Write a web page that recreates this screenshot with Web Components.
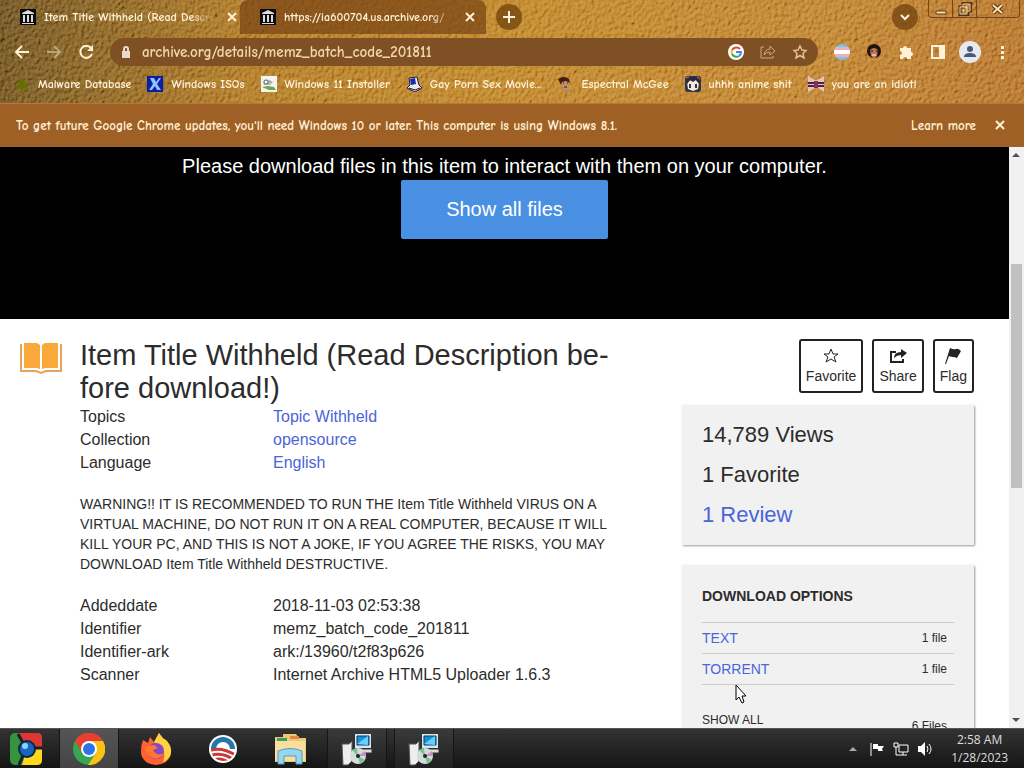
<!DOCTYPE html>
<html lang="en">
<head>
<meta charset="utf-8">
<meta name="viewport" content="width=device-width, initial-scale=1">
<title>Item details</title>
<style>
  html, body { height: 100%; margin: 0; }
  body {
    display: flex;
    flex-direction: column;
    overflow: hidden;
    font-family: "Liberation Sans", Arial, sans-serif;
    color: #2c2c2c;
    background: #fff;
  }
  browser-frame, task-bar { flex: none; }
  page-view { flex: 1; min-height: 0; }
</style>
</head>
<body>
<browser-frame>
  <browser-tab slot="tabs">Item Title Withheld (Read Descri</browser-tab>
  <browser-tab slot="tabs" inactive>https://ia600704.us.archive.org/</browser-tab>
  <book-mark slot="bookmarks" icon="malware">Malware Database</book-mark>
  <book-mark slot="bookmarks" icon="isos">Windows ISOs</book-mark>
  <book-mark slot="bookmarks" icon="installer">Windows 11 Installer</book-mark>
  <book-mark slot="bookmarks" icon="pc">Gay Porn Sex Movie...</book-mark>
  <book-mark slot="bookmarks" icon="face">Espectral McGee</book-mark>
  <book-mark slot="bookmarks" icon="anime">uhhh anime shit</book-mark>
  <book-mark slot="bookmarks" icon="flag">you are an idiot!</book-mark>
</browser-frame>
<page-view>
  <item-theatre></item-theatre>
  <item-details></item-details>
</page-view>
<task-bar></task-bar>

<script>
const define = (name, html, setup) => {
  const template = document.createElement("template");
  template.innerHTML = html;

  customElements.define(name, class extends HTMLElement {
    constructor() {
      super();
      const shadow = this.attachShadow({ mode: "open" });
      shadow.appendChild(template.content.cloneNode(true));
      if (setup) setup(this, shadow);
    }
  });
};

const bookmarkIcons = {
  malware: `<path d="M8 1l3 5 4 8-5-2-2 3-2-3-5 2 4-8z" fill="#667000"/>`,
  isos: `<path fill="#0820a8" d="M0 0h16v16H0z"/><path d="M3 2h4l2 4 3-4h2l-4 6 4 6h-4l-2-4-3 4H2l4-6z" fill="#8fc4ff"/>`,
  installer: `<path fill="#f4f4ec" d="M0 0h16v16H0z"/><path d="M2 6q4-5 10 0l-3 3H3z" fill="#a8b8ae"/><path d="M1 11l6-1 6 1 2 3H8z" fill="#73a34c"/><circle cx="5" cy="6" r="2" fill="#fff" stroke="#567"/>`,
  pc: `<path d="M3 2l8-1 2 8 3 3-7 4-8-4 3-3z" fill="#ece8e8" stroke="#1b1740"/><path d="M4 3l5-1 1 6-5 1z" fill="#172ca8"/><path d="M3 12l6 2 5-2" fill="none" stroke="#1b1740"/>`,
  face: `<path d="M4 5q5-3 8 1l-1 7-3 2-3-4z" fill="#c68d63"/><path d="M1 3q6-4 11 0l1 4-4-2-4 1-1 3z" fill="#471b13"/><path d="M6 7h1m3 0h1M7 11h3" stroke="#3c2018"/><path d="M6 14h7l1 2H6z" fill="#a88c60"/>`,
  anime: `<rect width="16" height="16" rx="3" fill="#343449"/><path d="M2 6l4-2h5l3 3-1 6-5 2-5-2z" fill="#f7e7df"/><path d="M2 8l3-4 3 2 3-2 3 4V2L8 0 2 2z" fill="#282840"/><path d="M4 8h2v4H4zm6 0h2v4h-2z" fill="#30384e"/><path d="M1 2l3-1M12 1l3 2" stroke="#d76878"/>`,
  flag: `<path d="M0 0l7 4h2l7-4v16l-6-4H7l-7 4z" fill="#e9c0bb"/><path d="M0 7h16M0 10h16" stroke="#4b2146" stroke-width="2"/><path d="M6 5h4v7H6z" fill="#813452"/>`
};

define("book-mark", `
  <style>
    :host { display: block; flex: none; }
    a { display: flex; align-items: center; gap: 8px; color: #fff1d5; text-decoration: none; white-space: nowrap; font-size: 12px; line-height: 16px; }
    svg { width: 16px; height: 16px; flex: none; }
  </style>
  <a href="#"><svg viewBox="0 0 16 16" aria-hidden="true"></svg><span><slot></slot></span></a>
`, (host, shadow) => {
  shadow.querySelector("svg").innerHTML = bookmarkIcons[host.getAttribute("icon")] || "";
});

define("browser-tab", `
  <style>
    :host { display: flex; align-items: center; gap: 8px; box-sizing: border-box; width: 240px; height: 34px; padding: 0 0 0 20px; border-radius: 8px 8px 0 0; font-size: 12px; }
    :host([inactive]) { width: 246px; padding-right: 8px; background: #784415b8; }
    span { flex: 1; overflow: hidden; white-space: nowrap; -webkit-mask-image: linear-gradient(90deg, #000 85%, transparent); }
    svg { width: 16px; height: 16px; flex: none; }
    button { width: 16px; height: 16px; padding: 0; border: 0; background: none; color: inherit; }
  </style>
  <svg viewBox="0 0 16 16" aria-hidden="true"><path d="M0 0h16v16H0z" fill="#0d0b09"/><path d="M8 1l6 3v1H2V4zM3 6h2v7H3zm4 0h2v7H7zm4 0h2v7h-2zM2 14h12v1H2z" fill="#ddd"/></svg>
  <span><slot></slot></span>
  <button aria-label="Close tab"><svg viewBox="0 0 16 16"><path d="M4 4l8 8m0-8l-8 8" stroke="currentColor" stroke-width="2"/></svg></button>
`);

define("browser-frame", `
  <style>
    :host { display: block; position: relative; z-index: 1; color: #fff1d5; font-family: "Comic Sans MS", "Comic Neue", "Open Sans", sans-serif; font-weight: 700; }
    .skin { position: relative; isolation: isolate; overflow: hidden; background: linear-gradient(100deg, #65481b 0, #80581d 10%, #aa701f 25%, #b97c22 50%, #b97928 80%, #b06a24); }
    .leather { position: absolute; inset: 0; width: 100%; height: 100%; z-index: -1; mix-blend-mode: soft-light; opacity: .8; }
    button { padding: 0; border: 0; color: inherit; background: none; display: grid; place-items: center; }
    svg { display: block; }
    .tabs { display: flex; align-items: center; height: 34px; }
    .new, .search { width: 26px; height: 26px; border-radius: 50%; background: #71420fc0; }
    .new { margin-left: 10px; }
    .search { margin-left: auto; margin-right: 10px; }
    .window { display: flex; align-self: flex-start; height: 17px; margin-right: 4px; border: 1px solid #714718; border-top: 0; border-radius: 0 0 4px 4px; }
    .window button { width: 24px; border-right: 1px solid #714718; }
    .window button:last-child { width: 42px; border: 0; }
    .toolbar { display: flex; align-items: center; height: 36px; padding: 0 14px; gap: 16px; }
    .toolbar > button { width: 16px; height: 16px; flex: none; }
    .toolbar > .avatar { width: 22px; height: 22px; margin: 0 -3px; border-radius: 50%; background: #e6e9f0; }
    .address { flex: 1; display: flex; align-items: center; height: 28px; min-width: 0; padding: 0 10px; gap: 10px; border-radius: 14px; background: #7e5023; }
    .address input { flex: 1; min-width: 0; padding: 0; border: 0; outline: 0; background: none; color: #f1d5ac; font: inherit; font-size: 15px; }
    .address .actions { display: flex; gap: 16px; }
    .marks { display: flex; align-items: center; box-sizing: border-box; height: 33px; padding: 0 14px 5px; gap: 16px; overflow: hidden; }
    .info { display: flex; align-items: center; box-sizing: border-box; height: 44px; padding: 0 16px; border-top: 1px solid #b77837; border-bottom: 1px solid #96663a; background: #9f6026; font-size: 13px; }
    .info a { margin-left: auto; margin-right: 16px; color: inherit; text-decoration: none; }
  </style>
  <div class="skin">
    <svg class="leather" aria-hidden="true">
      <filter id="grain" x="0" y="0" width="100%" height="100%">
        <feTurbulence type="fractalNoise" baseFrequency=".3 .25" numOctaves="3" seed="8" result="noise"/>
        <feDiffuseLighting in="noise" surfaceScale="2" diffuseConstant=".8" lighting-color="#fff"><feDistantLight azimuth="225" elevation="40"/></feDiffuseLighting>
      </filter>
      <rect width="100%" height="100%" filter="url(#grain)"/>
    </svg>
    <div class="tabs">
      <slot name="tabs"></slot>
      <button class="new" aria-label="New tab"><svg width="14" height="14"><path d="M7 1v12M1 7h12" stroke="currentColor" stroke-width="2"/></svg></button>
      <button class="search" aria-label="Search tabs"><svg width="12" height="12"><path d="M2 4l4 4 4-4" fill="none" stroke="currentColor" stroke-width="2"/></svg></button>
      <div class="window">
        <button aria-label="Minimize"><svg width="14" height="14"><path d="M2 9h10v3H2z" fill="#ffe0ac" stroke="#57391d"/></svg></button>
        <button aria-label="Restore"><svg width="14" height="14" fill="none"><path d="M5 1h8v8h-3v4H2V5h3z" stroke="#513415" stroke-width="3"/><path d="M5 5V2h7v7H9M2 5h7v7H2zm3 3h1v1H5z" stroke="#ffe0ac"/></svg></button>
        <button aria-label="Close"><svg width="14" height="14"><path d="M2 3l9 8m0-8l-9 8" stroke="#513415" stroke-width="4"/><path d="M2 3l9 8m0-8l-9 8" stroke="#ffe0ac" stroke-width="2"/></svg></button>
      </div>
    </div>
    <div class="toolbar">
      <button aria-label="Back"><svg width="16" height="16" fill="none" stroke="currentColor" stroke-width="2"><path d="M15 8H2m6-6L2 8l6 6"/></svg></button>
      <button aria-label="Forward" style="opacity:.45"><svg width="16" height="16" fill="none" stroke="currentColor" stroke-width="2"><path d="M1 8h13M8 2l6 6-6 6"/></svg></button>
      <button aria-label="Reload"><svg width="16" height="16" fill="none" stroke="currentColor" stroke-width="2"><path d="M13 4a6 6 0 1 0 1 6"/><path d="M15 1v6H9z" fill="currentColor" stroke="none"/></svg></button>
      <div class="address">
        <svg width="12" height="16"><path d="M2 7h8v7H2z" fill="#eadbc8"/><path d="M4 7V5a2 2 0 0 1 4 0v2" fill="none" stroke="#eadbc8" stroke-width="2"/></svg>
        <input aria-label="Address" value="archive.org/details/memz_batch_code_201811">
        <div class="actions">
          <button aria-label="Google"><svg width="16" height="16" fill="none" stroke-width="2"><circle cx="8" cy="8" r="8" fill="#fff"/><path d="M4 6a5 5 0 0 1 8-1" stroke="#ea4335"/><path d="M4 6a5 5 0 0 0 0 4" stroke="#fbbc05"/><path d="M4 10a5 5 0 0 0 7 2" stroke="#34a853"/><path d="M8 8h5q0 3-2 4" stroke="#4285f4"/></svg></button>
          <button aria-label="Share page"><svg width="16" height="16" fill="none" stroke="#cfaa7d"><path d="M4 3H1v11h12v-2"/><path d="M4 11q1-6 6-6V2l5 5-5 4V8q-4 0-6 3z"/></svg></button>
          <button aria-label="Bookmark page"><svg width="16" height="16" fill="none" stroke="#e2bf94" stroke-width="1.5"><path d="M8 2l2 4 4 .5-3 3 1 4.500-4-2.500L4 14l1-4.500-3-3L6 6z"/></svg></button>
        </div>
      </div>
      <button aria-label="Flag extension"><svg width="16" height="16" viewBox="0 0 16 16"><clipPath id="disc"><circle cx="8" cy="8" r="8"/></clipPath><g clip-path="url(#disc)"><path fill="#71c6e8" d="M0 0h16v16H0z"/><path fill="#efafbd" d="M0 3h16v10H0z"/><path fill="#fff" d="M0 6h16v4H0z"/></g></svg></button>
      <button aria-label="Portrait extension"><svg width="16" height="16"><circle cx="8" cy="7" r="7" fill="#24120d"/><path d="M4 6q4-4 8 0l-1 6-3 3-3-3z" fill="#b8795a"/><path d="M5 7h2m3 0h2" stroke="#241515"/><path d="M6 11h4" stroke="#fff"/></svg></button>
      <button aria-label="Extensions"><svg width="16" height="16"><path d="M2 4h3a2 2 0 1 1 4 0h4v4a2 2 0 1 1 0 4v3H9a2 2 0 1 0-4 0H2v-4a2 2 0 1 0 0-4z" fill="currentColor"/></svg></button>
      <button aria-label="Side panel"><svg width="16" height="16"><path d="M2 2h12v12H2z" fill="none" stroke="currentColor" stroke-width="2"/><path d="M9 2h5v12H9z" fill="currentColor"/></svg></button>
      <button class="avatar" aria-label="Profile"><svg width="16" height="16"><circle cx="8" cy="5" r="3" fill="#4a5877"/><path d="M2 13q0-4 6-4t6 4z" fill="#4a5877"/></svg></button>
      <button aria-label="Menu"><svg width="16" height="16" fill="currentColor"><path d="M7 2h3v3H7zm0 5h3v3H7zm0 5h3v3H7z"/></svg></button>
    </div>
    <nav class="marks" aria-label="Bookmarks"><slot name="bookmarks"></slot></nav>
  </div>
  <div class="info">
    <span>To get future Google Chrome updates, you'll need Windows 10 or later. This computer is using Windows 8.1.</span>
    <a href="#">Learn more</a>
    <button aria-label="Dismiss"><svg width="16" height="16"><path d="M4 4l8 8m0-8l-8 8" stroke="currentColor" stroke-width="2"/></svg></button>
  </div>
`);

define("page-view", `
  <style>
    :host { display: flex; position: relative; overflow: hidden; background: #fff; }
    main { flex: 1; min-width: 0; overflow: hidden; }
    .bar { display: flex; flex-direction: column; align-items: center; flex: none; box-sizing: border-box; width: 15px; padding: 5px 0; background: #f1f1f1; }
    .thumb { flex: 224; width: 11px; background: #c1c1c1; }
    .before { flex: 106; }
    .after { flex: 229; }
    .pointer { position: absolute; left: 735px; top: 537px; }
  </style>
  <main><slot></slot></main>
  <div class="bar" aria-hidden="true">
    <svg width="9" height="6"><path d="M0 5l4-4 4 4z" fill="#505050"/></svg>
    <div class="before"></div><div class="thumb"></div><div class="after"></div>
    <svg width="9" height="6"><path d="M0 1h8L4 5z" fill="#505050"/></svg>
  </div>
  <svg class="pointer" width="12" height="20" aria-hidden="true"><path d="M1 1v15l3-3 3 6 2-1-2-6h4z" fill="#fff" stroke="#000"/></svg>
`);

define("item-theatre", `
  <style>
    :host { display: flex; flex-direction: column; align-items: center; justify-content: flex-end; box-sizing: border-box; height: 172px; padding-bottom: 80px; background: #000; color: #fff; font-size: 20px; line-height: 28px; text-align: center; }
    p { margin: 2px 0 0; }
    button { flex: none; height: 59px; padding: 0 45px 2px; border: 0; border-radius: 2px; background: #4990e2; color: #fff; font: inherit; }
  </style>
  <p>This item does not appear to have any files that can be experienced on Archive.org.</p>
  <p>Please download files in this item to interact with them on your computer.</p>
  <button>Show all files</button>
`);

define("item-details", `
  <style>
    :host { display: grid; grid-template-columns: 60px minmax(0, 1fr) 292px; padding: 20px 35px 0 20px; }
    .book { width: 42px; height: 34px; margin-top: 2px; }
    section { max-width: 580px; }
    h1 { margin: 0; font-size: 29px; line-height: 33px; font-weight: 400; }
    a { color: #4b64d9; text-decoration: none; }
    dl { display: grid; grid-template-columns: 193px 1fr; margin: 0; font-size: 16px; line-height: 23px; }
    dt, dd { margin: 0; }
    p { max-width: 540px; margin: 20px 0; font-size: 14px; line-height: 20px; }
    .actions { display: flex; justify-content: flex-end; gap: 9px; }
    .actions button { display: flex; flex-direction: column; align-items: center; justify-content: center; gap: 4px; height: 54px; padding: 0 5px; border: 2px solid #222; border-radius: 3px; background: #fff; color: #2c2c2c; font: 14px/16px "Liberation Sans", Arial, sans-serif; }
    .box { box-sizing: border-box; margin-top: 12px; padding: 10px 20px; background: #f1f1f1; box-shadow: 1px 1px 2px #999; }
    .stats { font-size: 22px; line-height: 40px; }
    .downloads { margin-top: 20px; padding-bottom: 40px; }
    h2 { margin: 0 0 5px; font-size: 14px; line-height: 42px; font-weight: 700; }
    .row { display: flex; align-items: center; justify-content: space-between; height: 30px; padding-right: 7px; border-top: 1px solid #ccc; font-size: 14px; }
    .row small { font-size: 12px; }
    .all { height: 70px; font-size: 12px; }
    .all small { padding-top: 12px; }
  </style>
  <svg class="book" viewBox="0 0 42 34" aria-label="Texts"><path d="M1 3v27h15l5 2 5-2h15V3" fill="none" stroke="#e6a35b" stroke-width="2"/><path d="M4 2h13l3 2v24l-3-1H4zM38 2H25l-3 2v24l3-1h13z" fill="#faa73c"/></svg>
  <section>
    <h1>Item Title Withheld (Read Description be-<br>fore download!)</h1>
    <dl>
      <dt>Topics</dt><dd><a href="#">Topic Withheld</a></dd>
      <dt>Collection</dt><dd><a href="#">opensource</a></dd>
      <dt>Language</dt><dd><a href="#">English</a></dd>
    </dl>
    <p>WARNING!! IT IS RECOMMENDED TO RUN THE Item Title Withheld VIRUS ON A VIRTUAL MACHINE, DO NOT RUN IT ON A REAL COMPUTER, BECAUSE IT WILL KILL YOUR PC, AND THIS IS NOT A JOKE, IF YOU AGREE THE RISKS, YOU MAY DOWNLOAD Item Title Withheld DESTRUCTIVE.</p>
    <dl>
      <dt>Addeddate</dt><dd>2018-11-03 02:53:38</dd>
      <dt>Identifier</dt><dd>memz_batch_code_201811</dd>
      <dt>Identifier-ark</dt><dd>ark:/13960/t2f83p626</dd>
      <dt>Scanner</dt><dd>Internet Archive HTML5 Uploader 1.6.3</dd>
    </dl>
  </section>
  <aside>
    <div class="actions">
      <button><svg width="16" height="16"><path d="M8 1l2 5h5l-4 3 2 5-5-3-5 3 2-5-4-3h5z" fill="none" stroke="#222"/></svg>Favorite</button>
      <button><svg width="18" height="16"><path d="M7 4H2v10h12v-3" fill="none" stroke="#222" stroke-width="2"/><path d="M5 10q0-6 7-6V1l6 4-6 5V7q-4 0-7 3z" fill="#222"/></svg>Share</button>
      <button><svg width="18" height="16"><path d="M6 0q4 2 6 1t5 2l-4 7q-2-1-4-1t-4-1l-3 8H1z" fill="#222"/></svg>Flag</button>
    </div>
    <div class="box stats">
      <div>14,789 Views</div><div>1 Favorite</div><div><a href="#">1 Review</a></div>
    </div>
    <div class="box downloads">
      <h2>DOWNLOAD OPTIONS</h2>
      <div class="row"><a href="#">TEXT</a><small>1 file</small></div>
      <div class="row"><a href="#">TORRENT</a><small>1 file</small></div>
      <div class="row all"><span>SHOW ALL</span><small>6 Files</small></div>
    </div>
  </aside>
`);

define("task-bar", `
  <style>
    :host { display: flex; align-items: stretch; position: relative; z-index: 1; box-sizing: border-box; height: 40px; border-top: 1px solid #555; background: linear-gradient(#333, #151515); color: #ddd; font: 12px/18px "Open Sans", sans-serif; }
    button { display: grid; place-items: center; box-sizing: border-box; width: 60px; padding: 0; border: 0; background: none; }
    .apps { display: flex; gap: 7px; }
    .apps button:first-child { width: 52px; }
    .apps .open { border: solid #151515; border-width: 0 1px; background: linear-gradient(#3a3a3a, #202020); }
    .apps .active { background: linear-gradient(#555, #444); }
    .tray { display: flex; align-items: center; gap: 8px; margin-left: auto; padding-right: 16px; }
    .tray button { width: 16px; height: 16px; }
    .clock { margin-left: 10px; text-align: center; }
  </style>
  <div class="apps">
    <button aria-label="Start"><svg width="34" height="34"><rect x="1" y="1" width="32" height="32" rx="5" fill="#35943d"/><path d="M10 1h18q5 0 5 5v10H18z" fill="#dc3734"/><path d="M18 17h15v11q0 5-5 5H13z" fill="#ffd71d"/><path d="M9 2l8 14h16M17 16l-7 17" fill="none" stroke="#16202b" stroke-width="3"/><circle cx="18" cy="17" r="9" fill="#102542"/><circle cx="18" cy="17" r="7" fill="#1766bd"/><circle cx="16" cy="14" r="3" fill="#8cd3ff"/></svg></button>
    <button class="open active" aria-label="Chrome"><svg width="32" height="32"><circle cx="16" cy="16" r="16" fill="#34a853"/><path d="M2 8a16 16 0 0 1 28 0H16l-7 12z" fill="#e64032"/><path d="M30 8a16 16 0 0 1-15 24l8-12-7-12z" fill="#fbc116"/><circle cx="16" cy="16" r="8" fill="#fff"/><circle cx="16" cy="16" r="6" fill="#2b73e8"/></svg></button>
    <button aria-label="Firefox"><svg width="32" height="32"><path d="M3 7l5 3 2-6 4 5 5-9 3 7 3-1q6 6 6 13a15 13 0 0 1-30 0Q1 12 3 7z" fill="#ff6133"/><path d="M14 9l5-9q3 5 8 8 5 6 4 12-2 7-8 9 5-14-9-20z" fill="#ffd23f"/><circle cx="16" cy="18" r="8" fill="#8648c6"/><path d="M5 14l9-2 4 3-5 2q4 7 11 3-4 7-11 5-7-3-8-11z" fill="#ff7830"/></svg></button>
    <button aria-label="Sunrise"><svg width="30" height="30" viewBox="0 0 30 30"><clipPath id="round"><circle cx="15" cy="15" r="12"/></clipPath><circle cx="15" cy="15" r="14" fill="#fff"/><g clip-path="url(#round)"><path fill="#2476ad" d="M0 0h30v15H0z"/><circle cx="15" cy="15" r="7" fill="#fff"/><path d="M1 17q12-5 28 5M1 22q14-5 26 5M3 27q10-5 18 2" fill="none" stroke="#c93a38" stroke-width="3"/></g></svg></button>
    <button aria-label="File Explorer"><svg width="34" height="34"><path d="M2 5h8V2h13l3 4h7v24H2z" fill="#e7c977"/><path d="M4 6h10v3H4z" fill="#41a15a"/><path d="M17 4h9v3h-9z" fill="#e98739"/><path d="M2 9h30v20H2z" fill="#f8dfa0"/><path d="M5 32V19q12-5 24 0v13h-6v-8H11v8z" fill="#98d6ee" stroke="#4a9dc4"/></svg></button>
    <button class="open" aria-label="Setup"><svg width="34" height="34"><path d="M15 2h16v14H15z" fill="#d8e7ed"/><path d="M17 4h12v9H17z" fill="#148fd8" stroke="#103b61"/><path d="M17 12l11-8v9z" fill="#65d0ff"/><path d="M14 17h18v4H14z" fill="#ddd" stroke="#333"/><path d="M2 12h7l3-3v20l-4 4H3z" fill="#eee" stroke="#555"/><circle cx="18" cy="24" r="8" fill="#d5ddd9"/><path d="M18 24l-6-6 5-2zM18 24l7 4-5 4z" fill="#74c496"/><path d="M18 24l7-5 1 5z" fill="#ca8ec2"/><circle cx="18" cy="24" r="2" fill="#222"/></svg></button>
    <button class="open" aria-label="Setup, second window"><svg width="34" height="34"><path d="M15 2h16v14H15z" fill="#d8e7ed"/><path d="M17 4h12v9H17z" fill="#148fd8" stroke="#103b61"/><path d="M17 12l11-8v9z" fill="#65d0ff"/><path d="M14 17h18v4H14z" fill="#ddd" stroke="#333"/><path d="M2 12h7l3-3v20l-4 4H3z" fill="#eee" stroke="#555"/><circle cx="18" cy="24" r="8" fill="#d5ddd9"/><path d="M18 24l-6-6 5-2zM18 24l7 4-5 4z" fill="#74c496"/><path d="M18 24l7-5 1 5z" fill="#ca8ec2"/><circle cx="18" cy="24" r="2" fill="#222"/></svg></button>
  </div>
  <div class="tray">
    <button aria-label="Hidden icons"><svg width="8" height="6"><path d="M0 5l4-4 4 4z" fill="#aaa"/></svg></button>
    <button aria-label="Action center"><svg width="16" height="16"><path d="M2 2v13" stroke="#fff"/><path d="M4 3h5v2h6l-2 3 1 2H9V8H4z" fill="#fff"/></svg></button>
    <button aria-label="Network"><svg width="16" height="16" fill="none" stroke="#fff"><path d="M6 4h9v7H6zM10 11v3m-4 0h8M3 6v8h3M1 2h4v4H1z"/></svg></button>
    <button aria-label="Volume"><svg width="16" height="16"><path d="M1 5h3l4-4v14l-4-4H1z" fill="#fff"/><path d="M10 5q2 3 0 6m2-8q4 5 0 10" fill="none" stroke="#fff"/></svg></button>
    <div class="clock">2:58 AM<br>1/28/2023</div>
  </div>
`);
</script>
</body>
</html>
